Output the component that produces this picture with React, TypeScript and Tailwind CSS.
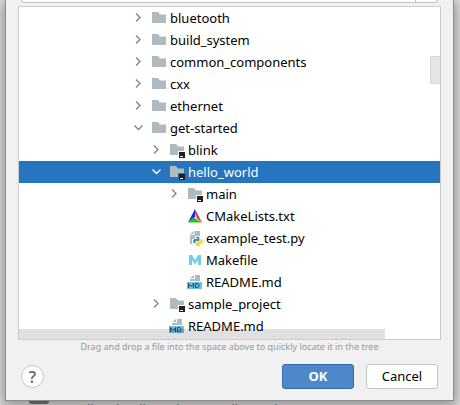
import React from "react";

type Kind = "folder" | "module" | "cmake" | "python" | "make" | "markdown";
type Item = { name: string; kind: Kind; depth: number; open?: boolean; selected?: boolean };

const items: Item[] = [
  { name: "bluetooth", kind: "folder", depth: 0 },
  { name: "build_system", kind: "folder", depth: 0 },
  { name: "common_components", kind: "folder", depth: 0 },
  { name: "cxx", kind: "folder", depth: 0 },
  { name: "ethernet", kind: "folder", depth: 0 },
  { name: "get-started", kind: "folder", depth: 0, open: true },
  { name: "blink", kind: "module", depth: 1 },
  { name: "hello_world", kind: "module", depth: 1, open: true, selected: true },
  { name: "main", kind: "module", depth: 2 },
  { name: "CMakeLists.txt", kind: "cmake", depth: 2 },
  { name: "example_test.py", kind: "python", depth: 2 },
  { name: "Makefile", kind: "make", depth: 2 },
  { name: "README.md", kind: "markdown", depth: 2 },
  { name: "sample_project", kind: "module", depth: 1 },
  { name: "README.md", kind: "markdown", depth: 1 },
];

const indents = ["pl-[111px]", "pl-[129px]", "pl-[147px]"];

function FileIcon({ kind }: { kind: Kind }) {
  return (
    <svg viewBox="0 0 16 16" className="size-4 shrink-0" aria-hidden="true">
      {(kind === "folder" || kind === "module") && (
        <path d={kind === "folder" ? "M1 2h6l2 2.500h6V13H1z" : "M1 2h6l2 2.500h6V9H9v4H1z"} fill="#aeb9c0" />
      )}
      {kind === "module" && (
        <>
          <path d="M10 10h6v6h-6z" fill="#231f20" />
          <path d="M11 14h3v1h-3z" fill="#fff" />
        </>
      )}
      {kind === "cmake" && (
        <>
          <path d="M8 1 1 14.500 8 9z" fill="#2524e8" />
          <path d="M8 1v8l7 5.500z" fill="#e0413f" />
          <path d="m1 14.500 5.500-5 8.500 5z" fill="#23c21f" />
          <path d="M8 5v5l2.500 1.500z" fill="#d8dadd" />
        </>
      )}
      {kind === "python" && (
        <>
          <path d="M7.500 1H13v5H8v3H5v5H3V5h4.500z" fill="#aeb9c0" />
          <path d="M6.500 1v3H3z" fill="#aeb9c0" />
          <path d="M9 8q0-1.500 1.500-1.500T12.500 8v2q0 1-1 1H9.500q-1.500 0-1.500 2.500-2 0-2-2.250T8 9h3v-.500H9z" fill="#3a8fca" />
          <path d="M13.500 9Q16 9 16 11.250t-2 2.250H11v.500h2.500q0 2-2.250 2T9 14.500V13q0-1.500 1.500-1.500H12q1.500 0 1.500-1.500z" fill="#ffd02e" />
        </>
      )}
      {kind === "make" && <path d="M2 13V3h3l3 5 3-5h3v10h-3V8l-3 4.500L5 8v5z" fill="#76cdea" />}
      {kind === "markdown" && (
        <>
          <path d="M8 1h5v6H3V5h5z" fill="#aeb9c0" />
          <path d="M7 1v3H3z" fill="#aeb9c0" />
          <path d="M0 8h15v7H0z" fill="#6fc1e0" />
          <path
            d="M1.500 14V9.500L4 12.500 6.500 9.500V14M8.500 9.500v4h1.500q2 0 2-2t-2-2z"
            fill="none"
            stroke="#254a5a"
            strokeWidth="1"
          />
        </>
      )}
    </svg>
  );
}

function Arrow({ item }: { item: Item }) {
  const hasArrow = item.kind === "folder" || item.kind === "module";
  return (
    <svg viewBox="0 0 16 16" className="size-4 shrink-0" aria-hidden="true">
      {hasArrow && (
        <path
          d={item.open ? "m4.500 5.500 4 4 4-4" : "m6 3.500 4 4-4 4"}
          fill="none"
          stroke={item.selected ? "#fff" : "#858585"}
          strokeWidth="1.400"
        />
      )}
    </svg>
  );
}

export default function App() {
  return (
    <div className="overflow-hidden bg-[#e4e4e4] pr-[6px] pl-[5px] font-['Noto_Sans',sans-serif] text-[13px] text-black">
      <main className="relative border border-t-0 border-[#8c8c8c] bg-[#f1f1f1] px-3 pb-[11px] shadow-[0_3px_12px_3px_rgba(0,0,0,0.35)]">
        <div className="mx-[3px] flex h-[3px] justify-end rounded-b-[3px] border border-t-0 border-[#c4c4c4] bg-white">
          <div className="w-[22px] border-l border-[#c4c4c4]" />
        </div>
        <section className="relative mt-[3px] h-[334px] overflow-hidden border border-[#cbcbcb] bg-white">
          <ul role="tree" aria-label="Files">
            {items.map((item, i) => (
              <li
                key={i}
                role="treeitem"
                aria-selected={!!item.selected}
                className={`flex h-[22px] items-center ${indents[item.depth]} ${item.selected ? "bg-[#2675bf] text-white" : ""}`}
              >
                <Arrow item={item} />
                <span className="ml-[5px] flex">
                  <FileIcon kind={item.kind} />
                </span>
                <span className="ml-[3px] leading-[22px] whitespace-nowrap">{item.name}</span>
              </li>
            ))}
          </ul>
          <div className="absolute top-[49px] right-0 h-7 w-[10px] border border-r-0 border-black/5 bg-black/10" />
          <div className="absolute bottom-0 left-0 h-[10px] w-[87%] bg-black/12" />
        </section>
        <p className="h-4 text-center text-[9px] leading-[14px] text-[#999]">
          Drag and drop a file into the space above to quickly locate it in the tree
        </p>
        <footer className="mt-2 flex items-center gap-3 px-[3px]">
          <button
            aria-label="Help"
            className="mr-auto flex size-[23px] items-center justify-center rounded-full border border-[#c4c4c4] bg-white text-[16px] font-semibold text-[#6e6e6e]"
          >
            ?
          </button>
          <button className="h-[25px] w-[72px] rounded-[3px] border border-[#346dad] bg-[#4d89c9] font-bold text-white">
            OK
          </button>
          <button className="h-[25px] w-[72px] rounded-[3px] border border-[#c4c4c4] bg-white">Cancel</button>
        </footer>
      </main>
      <div className="flex h-[5px] gap-[10px] pl-6 text-[#777]">
        <div className="h-[3px] w-5 rounded-b bg-[#777]" />
        <span className="leading-4">to adjust loading (Tim Compiler and</span>
      </div>
    </div>
  );
}
